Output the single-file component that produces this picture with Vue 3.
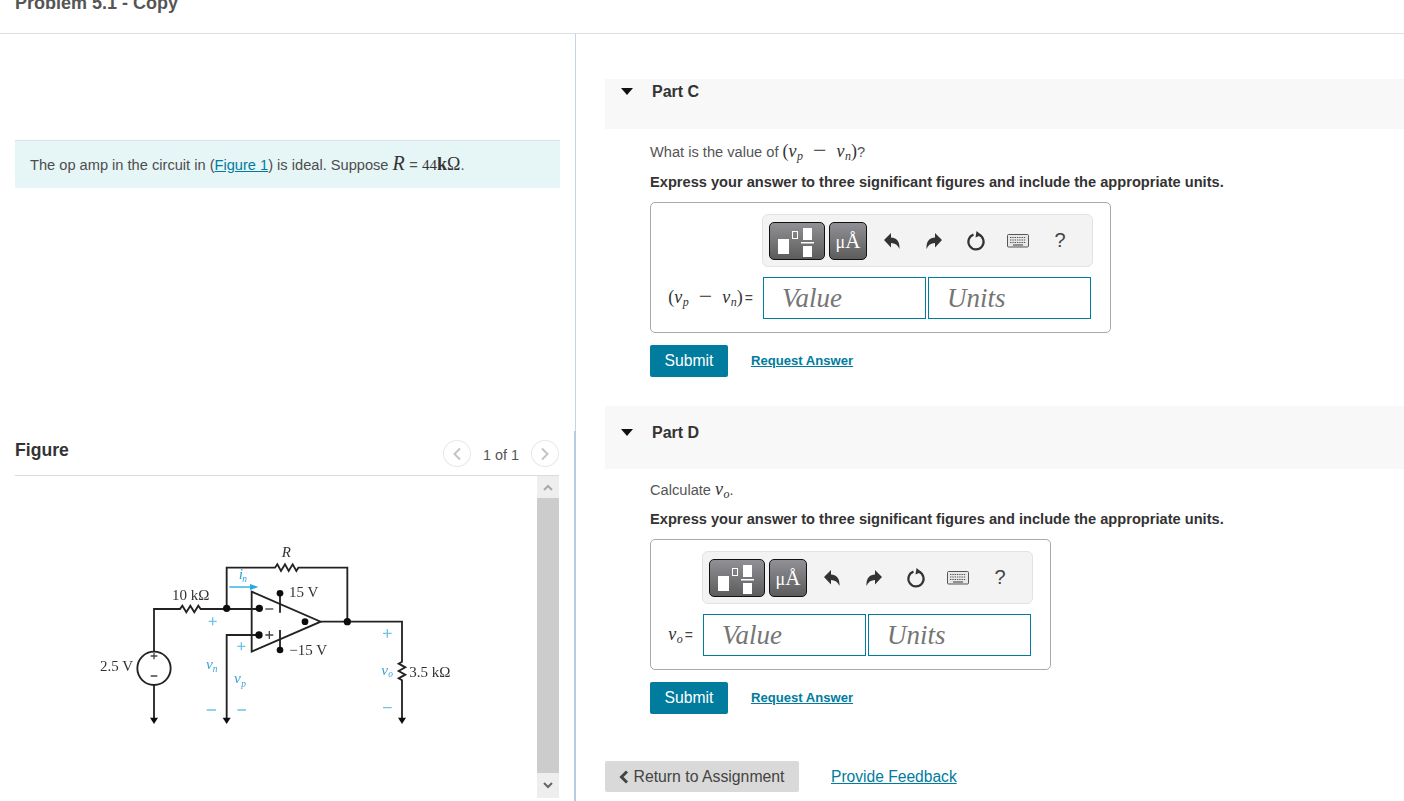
<script setup>
const parts = [
  { id: 'c', name: 'Part C' },
  { id: 'd', name: 'Part D' }
]
</script>

<template>
  <div class="page">
    <header class="topbar">
      <h1 class="title">Problem 5.1 - Copy</h1>
    </header>

    <div class="main">
      <div class="left">
        <section class="intro-wrap">
          <div class="intro">
            The op amp in the circuit in (<a class="link" href="#">Figure 1</a>) is ideal. Suppose
            <span class="math r"><i>R</i></span> = <span class="math num">44</span><span class="math"><b>k</b>Ω</span>.
          </div>
        </section>

        <section class="figure">
          <div class="figure-head">
            <span class="figure-title">Figure</span>
            <div class="pager">
              <span class="pager-btn">
                <svg width="10" height="14" viewBox="0 0 10 14"><path d="M8 1.5 2.5 7 8 12.5" fill="none" stroke="#c4c4c4" stroke-width="2" /></svg>
              </span>
              <span class="pager-text">1 of 1</span>
              <span class="pager-btn">
                <svg width="10" height="14" viewBox="0 0 10 14"><path d="M2 1.5 7.5 7 2 12.5" fill="none" stroke="#c4c4c4" stroke-width="2" /></svg>
              </span>
            </div>
          </div>

          <div class="figure-body">
            <div class="figure-scroll">
              <svg class="circuit" width="400" height="210" viewBox="0 0 1200 630">
                <defs>
                  <filter id="soft"><feGaussianBlur stdDeviation="1" /></filter>
                </defs>
                <g filter="url(#soft)">
                  <g fill="none" stroke="#222" stroke-width="5.5">
                    <path d="M222 365V237H300l7-10 12 20 12-20 12 20 12-20 7 10H540" />
                    <path d="M440 237V113H585l7-10 11 20 12-20 11 20 12-20 11 20 6-10H802V275" />
                    <path d="M440 565V315H537" />
                    <path d="M515 185 722 275 515 365Z" />
                    <path d="M722 275H966V395l-10 6 20 11-20 11 20 11-20 11 10 6V565" />
                    <path d="M222 465V565" />
                    <circle cx="222" cy="415" r="50" />
                    <path d="M600 190V248M600 300V360" />
                  </g>
                  <g fill="#111">
                    <circle cx="440" cy="235" r="11" />
                    <circle cx="538" cy="235" r="11" />
                    <circle cx="537" cy="315" r="11" />
                    <circle cx="600" cy="190" r="10" />
                    <circle cx="600" cy="360" r="10" />
                    <circle cx="675" cy="275" r="10" />
                    <circle cx="802" cy="275" r="11" />
                    <path d="M210 563H234L222 582Z" />
                    <path d="M428 563H452L440 582Z" />
                    <path d="M954 563H978L966 582Z" />
                  </g>
                  <path d="M448 171H520" fill="none" stroke="#27a9e1" stroke-width="4" />
                  <path d="M510 162 535 171 510 180Z" fill="#27a9e1" />
                  <path d="M556 237H580" stroke="#444" stroke-width="4" />
                  <path d="M556 315H580M568 303V327" stroke="#444" stroke-width="4" />
                  <path d="M212 378H232M222 368V388M212 438H232" stroke="#444" stroke-width="4" />
                  <path d="M386 274H410M398 262V286M472 349H496M484 337V361M909 310H935M922 297V323M380 540H408M472 540H498M909 533H935" stroke="#6cc4ea" stroke-width="4" />
                  <g class="c-text">
                    <text x="605" y="82" font-style="italic">R</text>
                    <text x="276" y="210">10 kΩ</text>
                    <text x="627" y="200">15 V</text>
                    <text x="628" y="374">−15 V</text>
                    <text x="60" y="422">2.5 V</text>
                    <text x="988" y="440">3.5 kΩ</text>
                  </g>
                  <g class="c-math">
                    <text x="476" y="146">i</text><text x="487" y="156" class="c-sub">n</text>
                    <text x="378" y="416">v</text><text x="398" y="426" class="c-sub">n</text>
                    <text x="462" y="460">v</text><text x="484" y="472" class="c-sub">p</text>
                    <text x="904" y="436">v</text><text x="925" y="440" class="c-sub">o</text>
                  </g>
                </g>
              </svg>
            </div>
            <div class="scrollbar">
              <span class="scroll-btn">
                <svg width="10" height="7" viewBox="0 0 10 7"><path d="M1 6 5 2 9 6" fill="none" stroke="#aaa" stroke-width="2" /></svg>
              </span>
              <span class="scroll-thumb"></span>
              <span class="scroll-btn short">
                <svg width="10" height="7" viewBox="0 0 10 7"><path d="M1 1 5 5 9 1" fill="none" stroke="#666" stroke-width="2" /></svg>
              </span>
            </div>
          </div>
        </section>
      </div>

      <div class="right">
        <section v-for="part in parts" :key="part.id" :class="['part', 'part-' + part.id]">
          <div class="part-band">
            <span class="caret"></span>
            <span class="part-name">{{ part.name }}</span>
          </div>
          <div class="part-body">
            <p v-if="part.id === 'c'" class="question">
              What is the value of
              <span class="math">(<i>v</i><sub>p</sub><span class="minus">−</span><i>v</i><sub>n</sub>)</span>?
            </p>
            <p v-else class="question">
              Calculate <span class="math"><i>v</i><sub>o</sub></span>.
            </p>
            <p class="express">Express your answer to three significant figures and include the appropriate units.</p>

            <div class="answer">
              <div class="toolbar">
                <span class="tool-btn tpl">
                  <svg width="54" height="36" viewBox="0 0 54 36">
                    <rect x="8" y="16" width="11" height="15" fill="#fff" />
                    <rect x="22.5" y="8.5" width="5" height="7" fill="none" stroke="#fff" />
                    <rect x="33" y="5" width="9" height="12" fill="#fff" />
                    <rect x="31" y="19" width="13" height="1.5" fill="#fff" />
                    <rect x="33" y="23" width="9" height="11" fill="#fff" />
                  </svg>
                </span>
                <span class="tool-btn mu"><span class="mu-small">μ</span>Å</span>
                <span class="tool">
                  <svg width="16" height="17" viewBox="0 0 16 17"><path d="M0 8 7 1V5.5C12 5.5 16 9 15.5 17 14 13 11 11 7 11V15.5Z" fill="#333" /></svg>
                </span>
                <span class="tool">
                  <svg width="16" height="17" viewBox="0 0 16 17"><path d="M16 8 9 1V5.5C4 5.5 0 9 .5 17 2 13 5 11 9 11V15.5Z" fill="#333" /></svg>
                </span>
                <span class="tool">
                  <svg width="20" height="20" viewBox="0 0 20 20">
                    <path d="M7.5 3.6A7.6 7.6 0 1 0 13 3.8" fill="none" stroke="#333" stroke-width="2.2" />
                    <path d="M10.5 0 15.5 4 9.5 6.5Z" fill="#333" />
                  </svg>
                </span>
                <span class="tool">
                  <svg width="22" height="14" viewBox="0 0 22 14">
                    <rect x=".5" y=".5" width="21" height="12.5" rx="1" fill="#e8e8e8" stroke="#555" />
                    <path d="M3 3.5H19M3 6H19M3 8.5H19" stroke="#555" stroke-width="1.2" stroke-dasharray="1.4 .9" />
                    <path d="M6 11H16" stroke="#555" stroke-width="1.2" />
                  </svg>
                </span>
                <span class="tool help">?</span>
              </div>

              <div class="fields">
                <span class="field-label">
                  <span v-if="part.id === 'c'" class="math">(<i>v</i><sub>p</sub><span class="minus">−</span><i>v</i><sub>n</sub>)</span>
                  <span v-else class="math"><i>v</i><sub>o</sub></span>
                  <span class="equals">=</span>
                </span>
                <span class="field">Value</span>
                <span class="field">Units</span>
              </div>
            </div>

            <div class="actions">
              <button class="submit">Submit</button>
              <a class="link request" href="#">Request Answer</a>
            </div>
          </div>
        </section>

        <div class="footer">
          <button class="back">
            <svg width="10" height="14" viewBox="0 0 10 14"><path d="M8 1.5 2.5 7 8 12.5" fill="none" stroke="#444" stroke-width="3" /></svg>
            Return to Assignment
          </button>
          <a class="link feedback" href="#">Provide Feedback</a>
        </div>
      </div>
    </div>
  </div>
</template>

<style scoped>
.page {
  height: 801px;
  overflow: hidden;
  display: flex;
  flex-direction: column;
  background: #fff;
  color: #4d4d4d;
  font-family: "Liberation Sans", Arial, sans-serif;
  font-size: 14.64px;
}

.topbar {
  height: 34px;
  box-sizing: border-box;
  border-bottom: 1px solid #dfdfdf;
  flex: none;
  padding-left: 15px;
  overflow: hidden;
}

.title {
  margin: -7px 0 0;
  font-size: 18px;
  line-height: 20px;
  font-weight: bold;
  color: #555;
}

.main {
  flex: 1;
  display: flex;
  min-height: 0;
}

.left {
  width: 576px;
  flex: none;
  display: flex;
  flex-direction: column;
}

.intro-wrap {
  height: 397px;
  flex: none;
  padding: 106px 15px 0;
  border-right: 1px solid #c5d3e4;
  box-sizing: border-box;
}

.intro {
  height: 48px;
  box-sizing: border-box;
  background: #e6f5f6;
  border-top: 1px solid #d9e0e1;
  padding-left: 15px;
  line-height: 49px;
  color: #4d4d4d;
}

.link {
  color: #007c9e;
  text-decoration: underline;
}

.math {
  font-family: "Liberation Serif", "DejaVu Serif", serif;
  font-size: 18px;
  line-height: 0;
  color: #333;
}

.math i {
  margin-right: 0.5px;
}

.math.r {
  font-size: 20px;
}

.math.num {
  font-size: 15px;
}

.math sub {
  font-size: 12px;
  font-style: italic;
  line-height: 0;
  vertical-align: -3px;
}

.minus {
  margin: 0 10px;
  font-size: 24px;
  vertical-align: -1px;
}

.figure {
  flex: 1;
  min-height: 0;
  display: flex;
  flex-direction: column;
  padding-left: 15px;
  padding-right: 15px;
  border-right: 2px solid #b9cde2;
  box-sizing: border-box;
}

.figure-head {
  height: 45px;
  flex: none;
  box-sizing: border-box;
  border-bottom: 1px solid #dcdcdc;
  display: flex;
  align-items: center;
  justify-content: space-between;
  padding-bottom: 5px;
}

.figure-title {
  font-size: 17.6px;
  font-weight: bold;
  color: #333;
}

.pager {
  display: flex;
  align-items: center;
  gap: 12px;
  margin-top: 6px;
}

.pager-btn {
  width: 28px;
  height: 27px;
  border: 1px solid #e8e8e8;
  border-radius: 50%;
  box-sizing: border-box;
  display: flex;
  align-items: center;
  justify-content: center;
}

.pager-text {
  font-size: 14.4px;
  padding-top: 2px;
  color: #555;
}

.figure-body {
  flex: 1;
  min-height: 0;
  display: flex;
}

.figure-scroll {
  flex: 1;
  padding: 54px 0 0 65px;
  overflow: hidden;
}

.circuit {
  display: block;
}

.c-text text {
  font-family: "Liberation Serif", serif;
  font-size: 45px;
  fill: #333;
}

.c-math text {
  font-family: "Liberation Serif", serif;
  font-style: italic;
  font-size: 46px;
  fill: #3a9fd6;
}

.c-math .c-sub {
  font-size: 28px;
}

.scrollbar {
  width: 22px;
  height: 322px;
  flex: none;
  display: flex;
  flex-direction: column;
}

.scroll-btn {
  height: 22px;
  flex: none;
  background: #eee;
  display: flex;
  align-items: center;
  justify-content: center;
}

.scroll-btn.short {
  height: 25px;
}

.scroll-thumb {
  flex: 1;
  background: #ccc;
}

.right {
  flex: 1;
  min-width: 0;
  padding: 45px 0 0 29px;
}

.part-band {
  background: #f8f8f8;
  display: flex;
  align-items: flex-start;
  padding-left: 16px;
  padding-top: 3px;
  height: 50px;
  box-sizing: border-box;
}

.part-d {
  margin-top: 29px;
}

.part-d .part-band {
  height: 63px;
  padding-top: 17px;
}

.caret {
  width: 0;
  height: 0;
  margin-top: 6px;
  border-left: 6px solid transparent;
  border-right: 6px solid transparent;
  border-top: 7px solid #111;
}

.part-name {
  margin-left: 19px;
  font-size: 16px;
  line-height: 20px;
  font-weight: bold;
  color: #333;
}

.part-body {
  padding-left: 45px;
}

.question,
.express {
  margin: 0;
  line-height: 20px;
}

.question {
  margin-top: 13px;
  color: #555;
}

.express {
  margin-top: 10px;
  font-weight: bold;
  color: #333;
}

.part-d .question {
  margin-top: 11px;
}

.part-d .express {
  margin-top: 9px;
}

.answer {
  margin-top: 10px;
  height: 131px;
  width: 461px;
  box-sizing: border-box;
  border: 1px solid #aaa;
  border-radius: 5px;
  padding: 11px 17px 0 0;
  display: flex;
  flex-direction: column;
  align-items: flex-end;
}

.part-d .answer {
  width: 401px;
}

.toolbar {
  width: 331px;
  height: 53px;
  box-sizing: border-box;
  background: #f3f3f3;
  border: 1px solid #e2e2e2;
  border-radius: 6px;
  display: flex;
  align-items: center;
  padding-left: 6px;
}

.tool-btn {
  height: 38px;
  box-sizing: border-box;
  border: 1px solid #111;
  border-radius: 5px;
  background: linear-gradient(#919095, #5c5c5c);
  display: flex;
  align-items: center;
  justify-content: center;
  flex: none;
}

.tpl {
  width: 56px;
}

.mu {
  width: 38px;
  margin: 0 4px;
  color: #fff;
  font-family: "Liberation Serif", serif;
  font-size: 21px;
  font-weight: 400;
  padding-top: 6px;
  align-items: baseline;
}

.mu-small {
  font-size: 18px;
}

.tool {
  width: 42px;
  flex: none;
  display: flex;
  justify-content: center;
  align-items: center;
}

.help {
  font-size: 20px;
  color: #444;
}

.fields {
  margin-top: 10px;
  margin-right: 2px;
  display: flex;
  align-items: center;
  gap: 2px;
}

.field-label {
  margin-right: 8px;
  font-size: 14px;
  color: #444;
  white-space: nowrap;
}

.equals {
  margin-left: 2px;
}

.field {
  width: 163px;
  height: 42px;
  box-sizing: border-box;
  border: 1px solid #007c9e;
  padding-left: 18px;
  font-family: "Liberation Serif", serif;
  font-style: italic;
  font-size: 27px;
  line-height: 40px;
  color: #757575;
}

.actions {
  margin-top: 12px;
  display: flex;
  align-items: center;
  gap: 23px;
}

.submit {
  width: 78px;
  height: 32px;
  border: 0;
  border-radius: 2px;
  background: #007c9e;
  color: #fff;
  font-family: inherit;
  font-size: 15.7px;
  padding: 0;
}

.request {
  font-size: 13.1px;
  font-weight: bold;
  margin-bottom: 2px;
}

.footer {
  margin-top: 47px;
  display: flex;
  align-items: center;
  gap: 32px;
}

.back {
  width: 194px;
  height: 31px;
  border: 0;
  border-radius: 2px;
  background: #d9d9d9;
  color: #444;
  font-family: inherit;
  font-size: 15.8px;
  padding: 0;
  display: flex;
  align-items: center;
  justify-content: center;
  gap: 4px;
}

.feedback {
  font-size: 15.6px;
}
</style>
